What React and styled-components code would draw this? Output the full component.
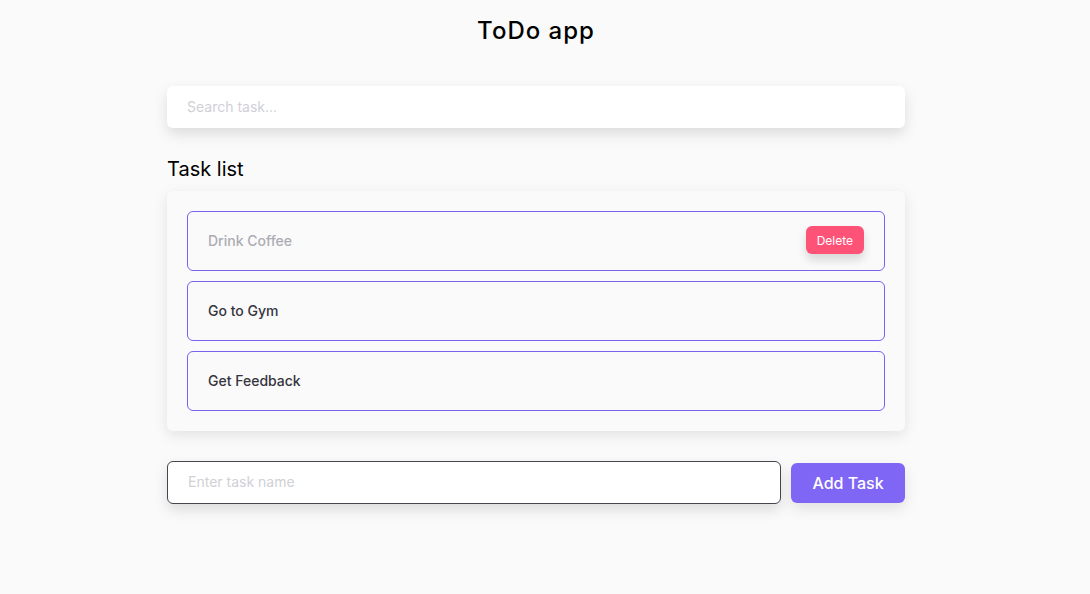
import React, { useState } from "react"
import styled, { createGlobalStyle } from "styled-components"

const GlobalStyle = createGlobalStyle`
  body {
    margin: 0;
    background-color: #fafafa;
    font-family: "Inter", "Noto Sans", sans-serif;
  }
  * {
    box-sizing: border-box;
  }
`

// leaves room where the scrollbar sat in the original page
const Page = styled.div`
  min-height: 594px;
  padding: 14px 18px 0 0;
`
const Title = styled.h1`
  margin: 0;
  text-align: center;
  font-size: 24px;
  font-weight: 500;
  letter-spacing: 1px;
  line-height: 34px;
  color: #000;
`
const Container = styled.main`
  width: 738px;
  margin: 38px auto 0;
`
const SearchBox = styled.input`
  display: block;
  width: 100%;
  height: 42px;
  padding: 0 20px 2px;
  border: none;
  border-radius: 6px;
  background: #fff;
  box-shadow: 0 6px 14px rgba(0, 0, 0, 0.12);
  font-family: inherit;
  font-size: 14px;
  outline: none;
  &::placeholder {
    color: #d0d0d6;
  }
`
const Heading = styled.h2`
  margin: 28px 0 9px;
  font-size: 20px;
  font-weight: 400;
  line-height: 26px;
  color: #000;
`
const ListCard = styled.ul`
  list-style: none;
  margin: 0;
  padding: 20px;
  display: flex;
  flex-direction: column;
  gap: 10px;
  border-radius: 6px;
  background: #fafafa;
  box-shadow: 0 4px 14px rgba(0, 0, 0, 0.1);
`
const Item = styled.li`
  display: flex;
  align-items: center;
  justify-content: space-between;
  height: 60px;
  padding: 0 20px 2px;
  border: 1px solid #7b61f0;
  border-radius: 6px;
  font-size: 14px;
  font-weight: 500;
  color: ${props => (props.muted ? "#acacb4" : "#35353d")};
`
const DeleteButton = styled.button`
  height: 28px;
  padding: 0 11px;
  border: none;
  border-radius: 6px;
  background: #ff5277;
  color: #fff;
  font-family: inherit;
  font-size: 12px;
  box-shadow: 0 6px 10px rgba(0, 0, 0, 0.14);
  cursor: pointer;
`
const AddRow = styled.form`
  display: flex;
  align-items: center;
  gap: 10px;
  margin-top: 30px;
`
const TaskInput = styled.input`
  flex: 1;
  height: 43px;
  padding: 0 20px 2px;
  border: 1px solid #45454f;
  border-radius: 6px;
  background: #fff;
  box-shadow: 0 6px 14px rgba(0, 0, 0, 0.12);
  font-family: inherit;
  font-size: 14px;
  outline: none;
  &::placeholder {
    color: #d0d0d6;
  }
`
const AddButton = styled.button`
  width: 114px;
  height: 40px;
  border: none;
  border-radius: 6px;
  background: #8066f4;
  color: #fff;
  font-family: inherit;
  font-size: 16px;
  font-weight: 500;
  box-shadow: 0 6px 14px rgba(0, 0, 0, 0.1);
  cursor: pointer;
`

const tasks = [
  { id: 1, name: "Drink Coffee", done: true },
  { id: 2, name: "Go to Gym", done: false },
  { id: 3, name: "Get Feedback", done: false },
]

const App = () => {
  const [list] = useState(tasks)
  return (
    <Page>
      <GlobalStyle />
      <Title>ToDo app</Title>
      <Container>
        <SearchBox placeholder="Search task..." />
        <Heading>Task list</Heading>
        <ListCard>
          {list.map(task => (
            <Item key={task.id} muted={task.done}>
              {task.name}
              {task.done && <DeleteButton type="button">Delete</DeleteButton>}
            </Item>
          ))}
        </ListCard>
        <AddRow onSubmit={e => e.preventDefault()}>
          <TaskInput placeholder="Enter task name" />
          <AddButton type="submit">Add Task</AddButton>
        </AddRow>
      </Container>
    </Page>
  )
}
export default App
